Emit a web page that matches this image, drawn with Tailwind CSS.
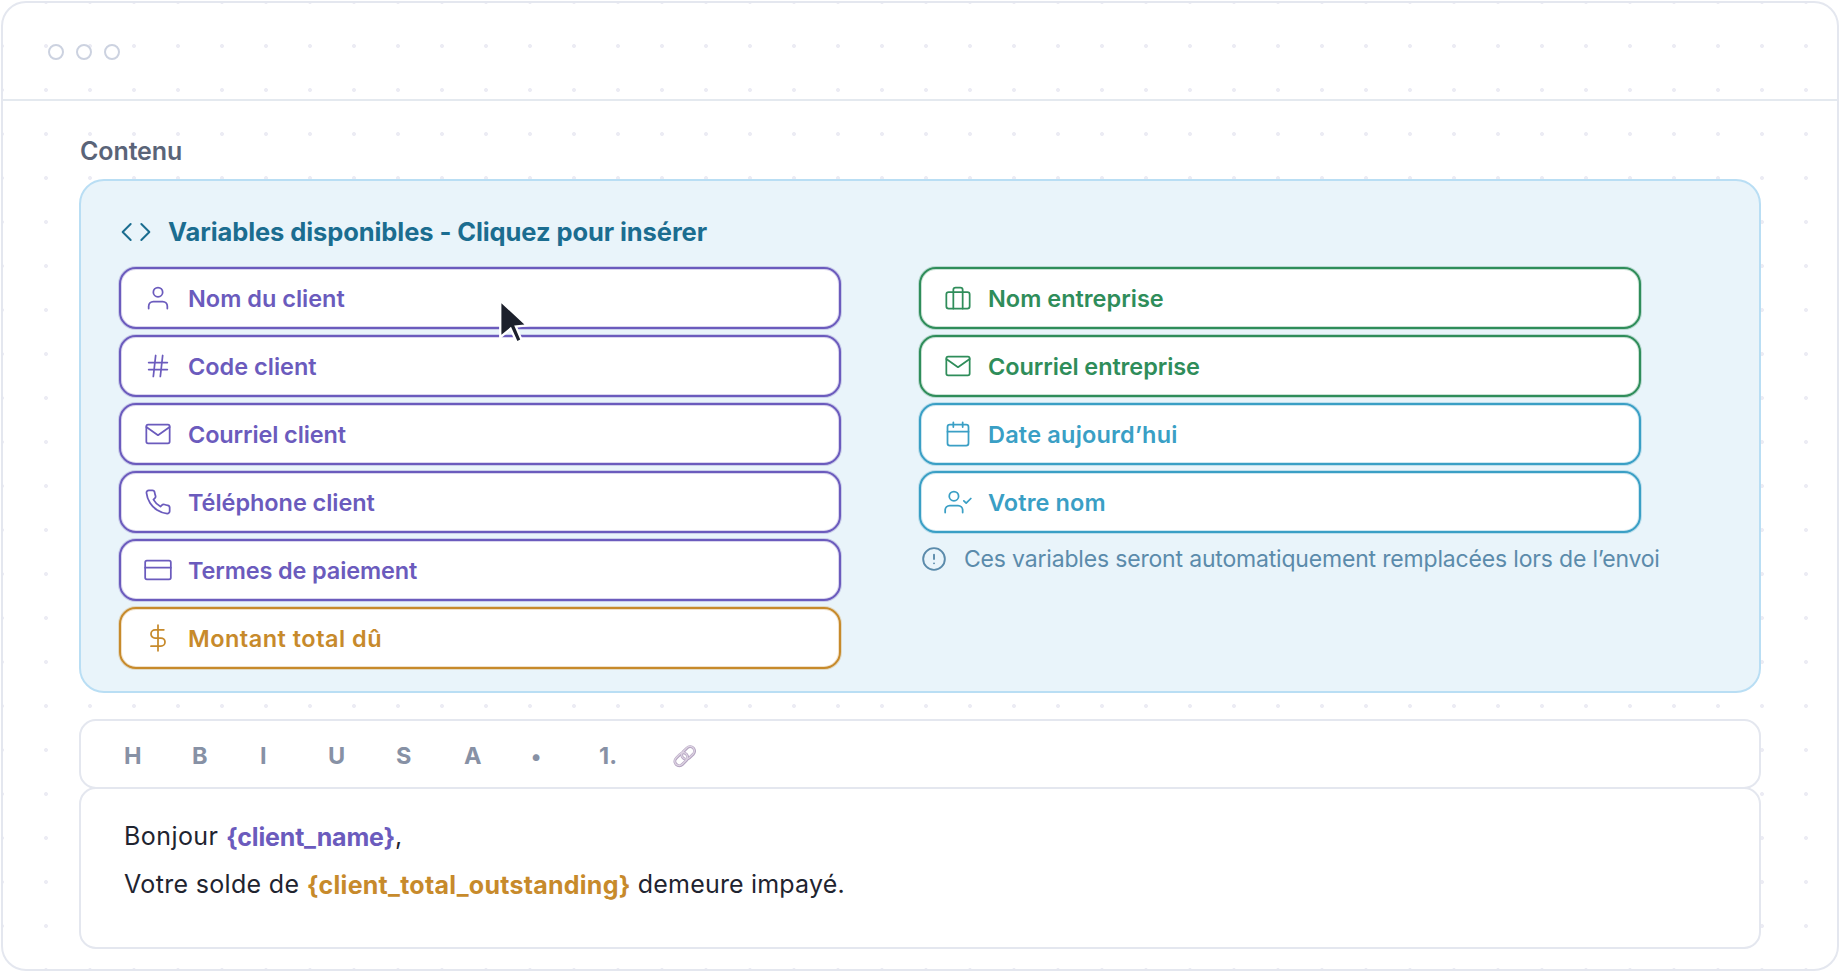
<!DOCTYPE html>
<html lang="fr">
<head>
<meta charset="utf-8">
<title>Contenu</title>
<script src="https://cdn.jsdelivr.net/npm/@tailwindcss/browser@4"></script>
</head>
<body class="bg-white font-['Inter',sans-serif]">
<svg class="hidden">
  <defs>
    <symbol id="user" viewBox="0 0 24 24"><path d="M20 21v-2a4 4 0 0 0-4-4H8a4 4 0 0 0-4 4v2"/><circle cx="12" cy="7" r="4"/></symbol>
    <symbol id="hash" viewBox="0 0 24 24"><path d="M4 9h16M4 15h16M10 3 8 21M16 3l-2 18"/></symbol>
    <symbol id="mail" viewBox="0 0 24 24"><rect x="2" y="4" width="20" height="16" rx="1.5"/><path d="m22 6-10 7L2 6"/></symbol>
    <symbol id="phone" viewBox="0 0 24 24"><path d="M22 16.92v3a2 2 0 0 1-2.18 2 19.79 19.79 0 0 1-8.63-3.07 19.5 19.5 0 0 1-6-6 19.79 19.79 0 0 1-3.07-8.67A2 2 0 0 1 4.11 2h3a2 2 0 0 1 2 1.72c.127.96.361 1.903.7 2.81a2 2 0 0 1-.45 2.11L8.09 9.91a16 16 0 0 0 6 6l1.27-1.27a2 2 0 0 1 2.11-.45c.907.339 1.85.573 2.81.7A2 2 0 0 1 22 16.92z"/></symbol>
    <symbol id="card" viewBox="0 0 24 24"><rect x="1" y="4" width="22" height="16" rx="1.5"/><path d="M1 10h22"/></symbol>
    <symbol id="dollar" viewBox="0 0 24 24"><path d="M12 1v22M17 5H9.5a3.5 3.5 0 0 0 0 7h5a3.5 3.5 0 0 1 0 7H6"/></symbol>
    <symbol id="case" viewBox="0 0 24 24"><rect x="2" y="7" width="20" height="14" rx="2"/><path d="M16 21V5a2 2 0 0 0-2-2h-4a2 2 0 0 0-2 2v16"/></symbol>
    <symbol id="cal" viewBox="0 0 24 24"><rect x="3" y="4" width="18" height="18" rx="2"/><path d="M16 2v4M8 2v4M3 10h18"/></symbol>
    <symbol id="check" viewBox="0 0 24 24"><path d="M16 21v-2a4 4 0 0 0-4-4H5a4 4 0 0 0-4 4v2"/><circle cx="8.5" cy="7" r="4"/><path d="m17 11 2 2 4-4"/></symbol>
  </defs>
</svg>
<div class="flex h-[972px] w-[1840px] p-px">
  <div class="relative flex flex-1 flex-col rounded-[25px] border-2 border-[#e4e7ef] bg-[radial-gradient(circle_at_center,#ececf4_1.6px,transparent_2.3px)] bg-[length:44px_44px] bg-[position:21px_21px]">
    <header class="flex h-[98px] shrink-0 items-center gap-3 border-b-2 border-[#e4e9ef] pl-[45px] pt-[2px]">
      <i class="size-4 rounded-full border-2 border-[#ccd2e0]"></i>
      <i class="size-4 rounded-full border-2 border-[#ccd2e0]"></i>
      <i class="size-4 rounded-full border-2 border-[#ccd2e0]"></i>
    </header>
    <main class="flex flex-col px-19 pt-[30px]">
      <h1 class="h-12 pl-[1px] text-[25px] leading-[41px] font-semibold tracking-[-0.1px] text-[#5a6478] whitespace-nowrap">Contenu</h1>
      <section class="h-[514px] rounded-[25px] border-2 border-[#b9def4] bg-[#e9f4fa] pl-[38px] pt-[35px]">
        <div class="flex h-8 items-center gap-4 pl-px text-[#1b6d90]">
          <svg class="size-8 fill-none stroke-current stroke-[1.5] [stroke-linecap:round] [stroke-linejoin:round]" viewBox="0 0 24 24"><path d="m16 18 6-6-6-6M8 6l-6 6 6 6"/></svg>
          <h2 class="text-[25.5px] font-bold tracking-[-0.09px] whitespace-nowrap">Variables disponibles - Cliquez pour insérer</h2>
        </div>
        <div class="mt-[19px] flex gap-[78px] text-[23.5px] font-semibold whitespace-nowrap">
          <div class="flex w-[722px] flex-col gap-1.5 text-[#6b5bbd] [&_span]:pt-px [&_svg]:size-7 [&_svg]:shrink-0 [&_svg]:fill-none [&_svg]:stroke-current [&_svg]:stroke-[1.5] [&_svg]:[stroke-linecap:round] [&_svg]:[stroke-linejoin:round]">
            <div class="flex h-[62px] items-center gap-4 rounded-[17px] border-2 border-current bg-white pl-[23px] shadow-[0_0_0_1px_#6b5bbd40,inset_0_0_0_1px_#6b5bbd40]"><svg><use href="#user"/></svg><span>Nom du client</span></div>
            <div class="flex h-[62px] items-center gap-4 rounded-[17px] border-2 border-current bg-white pl-[23px] shadow-[0_0_0_1px_#6b5bbd40,inset_0_0_0_1px_#6b5bbd40]"><svg><use href="#hash"/></svg><span>Code client</span></div>
            <div class="flex h-[62px] items-center gap-4 rounded-[17px] border-2 border-current bg-white pl-[23px] shadow-[0_0_0_1px_#6b5bbd40,inset_0_0_0_1px_#6b5bbd40]"><svg><use href="#mail"/></svg><span class="tracking-[-0.13px]">Courriel client</span></div>
            <div class="flex h-[62px] items-center gap-4 rounded-[17px] border-2 border-current bg-white pl-[23px] shadow-[0_0_0_1px_#6b5bbd40,inset_0_0_0_1px_#6b5bbd40]"><svg><use href="#phone"/></svg><span class="tracking-[-0.06px]">Téléphone client</span></div>
            <div class="flex h-[62px] items-center gap-4 rounded-[17px] border-2 border-current bg-white pl-[23px] shadow-[0_0_0_1px_#6b5bbd40,inset_0_0_0_1px_#6b5bbd40]"><svg><use href="#card"/></svg><span class="tracking-[-0.14px]">Termes de paiement</span></div>
            <div class="flex h-[62px] items-center gap-4 rounded-[17px] border-2 border-current bg-white pl-[23px] text-[#c78a2b] shadow-[0_0_0_1px_#c78a2b40,inset_0_0_0_1px_#c78a2b40]"><svg><use href="#dollar"/></svg><span class="tracking-[0.49px]">Montant total dû</span></div>
          </div>
          <div class="flex w-[722px] flex-col gap-1.5 text-[#2f8d5a] [&_span]:pt-px [&_svg]:size-7 [&_svg]:shrink-0 [&_svg]:fill-none [&_svg]:stroke-current [&_svg]:stroke-[1.5] [&_svg]:[stroke-linecap:round] [&_svg]:[stroke-linejoin:round]">
            <div class="flex h-[62px] items-center gap-4 rounded-[17px] border-2 border-current bg-white pl-[23px] shadow-[0_0_0_1px_#2f8d5a40,inset_0_0_0_1px_#2f8d5a40]"><svg><use href="#case"/></svg><span>Nom entreprise</span></div>
            <div class="flex h-[62px] items-center gap-4 rounded-[17px] border-2 border-current bg-white pl-[23px] shadow-[0_0_0_1px_#2f8d5a40,inset_0_0_0_1px_#2f8d5a40]"><svg><use href="#mail"/></svg><span class="tracking-[-0.1px]">Courriel entreprise</span></div>
            <div class="flex h-[62px] items-center gap-4 rounded-[17px] border-2 border-current bg-white pl-[23px] text-[#3a9fc5] shadow-[0_0_0_1px_#3a9fc540,inset_0_0_0_1px_#3a9fc540]"><svg><use href="#cal"/></svg><span class="tracking-[0.2px]">Date aujourd’hui</span></div>
            <div class="flex h-[62px] items-center gap-4 rounded-[17px] border-2 border-current bg-white pl-[23px] text-[#3a9fc5] shadow-[0_0_0_1px_#3a9fc540,inset_0_0_0_1px_#3a9fc540]"><svg><use href="#check"/></svg><span class="tracking-[0.1px]">Votre nom</span></div>
            <div class="flex h-10 items-center gap-4 pl-px text-[23px] font-normal text-[#5b8bab]">
              <svg viewBox="0 0 24 24"><g transform="translate(.86 .86) scale(.929)" stroke-width="1.75"><circle cx="12" cy="12" r="10"/><path d="M12 8v4M12 16h.01"/></g></svg>
              <span class="tracking-[-0.18px]">Ces variables seront automatiquement remplacées lors de l’envoi</span>
            </div>
          </div>
        </div>
      </section>
      <div class="mt-[26px] flex h-[70px] items-center rounded-[17px] border-2 border-[#e4e7ef] bg-white pl-[43px] text-[23.5px] font-bold text-[#8791a5] [&>span]:w-17 [&>span]:pt-1">
        <span>H</span><span>B</span><span>I</span><span>U</span><span>S</span><span>A</span><span class="-indent-px text-[21.5px]">•</span><span class="-indent-px">1.</span>
        <svg class="mt-[3px] ml-[3px] size-7 fill-none" viewBox="0 0 28 28">
          <g stroke="#b3a3c0" stroke-width="2.9"><rect x="-7.2" y="-4.4" width="14.4" height="8.8" rx="4.4" transform="translate(17.2 11) rotate(-45)"/><rect x="-7.2" y="-4.4" width="14.4" height="8.8" rx="4.4" transform="translate(10.3 17.3) rotate(-45)"/></g>
          <g stroke="#ddd3e2" stroke-width="1.3"><rect x="-7.2" y="-4.4" width="14.4" height="8.8" rx="4.4" transform="translate(17 10.8) rotate(-45)"/><rect x="-7.2" y="-4.4" width="14.4" height="8.8" rx="4.4" transform="translate(10.1 17.1) rotate(-45)"/></g>
        </svg>
      </div>
      <div class="-mt-0.5 flex h-[162px] flex-col rounded-[17px] border-2 border-[#e4e7ef] bg-white pl-[43px] pt-[23px] text-[25px] leading-[48px] text-[#1f2430] whitespace-pre">
        <p class="h-12"><span class="tracking-[0.44px]">Bonjour </span><b class="align-[-1px] leading-none font-bold tracking-[-0.18px] text-[#6b5bbd]">{client_name}</b><span>,</span></p>
        <p class="h-12"><span class="tracking-[0.33px]">Votre solde de </span><b class="align-[-1px] leading-none font-bold tracking-[0.25px] text-[#c78a2b]">{client_total_outstanding}</b><span class="tracking-[0.18px]"> demeure impayé.</span></p>
      </div>
    </main>
    <svg class="absolute left-[489px] top-[292px] h-[52px] w-[46px]" viewBox="492 295 46 52">
      <path d="M501.4 303.2 524.4 324.4 514.2 325.6 520.2 339.6 517.4 341 511 326.8 501.4 334.8z" fill="#1c202b" stroke="#fff" stroke-width="4.6" paint-order="stroke"/>
    </svg>
  </div>
</div>
</body>
</html>
